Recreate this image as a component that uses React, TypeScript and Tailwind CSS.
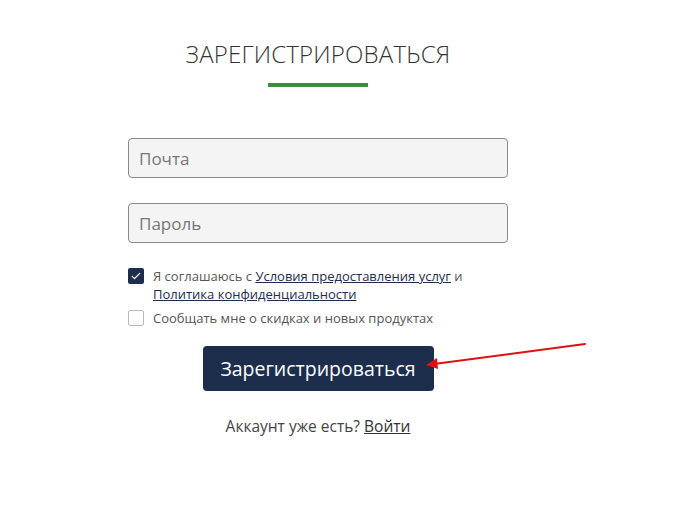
export default function App() {
  return (
    <div className="relative min-h-[520px] w-[676px] bg-white font-['Open_Sans',sans-serif] text-[#333]">
      <div className="ml-[128px] flex w-[380px] flex-col items-center pt-[38px]">
        <h1 className="h-[32px] text-[24px] leading-[32px] font-light tracking-[0.2px] text-[#333]">
          ЗАРЕГИСТРИРОВАТЬСЯ
        </h1>
        <div className="mt-[13px] h-[4px] w-[100px] bg-[#3d8c40]" />

        <input
          placeholder="Почта"
          className="mt-[51px] h-[40px] w-full rounded-[4px] border border-[#8a8a8a] bg-[#f4f4f4] px-[10px] text-[17px] text-[#333] outline-none placeholder:text-[#777]"
        />
        <input
          placeholder="Пароль"
          className="mt-[25px] h-[40px] w-full rounded-[4px] border border-[#8a8a8a] bg-[#f4f4f4] px-[10px] text-[17px] text-[#333] outline-none placeholder:text-[#777]"
        />

        <div className="mt-[24px] flex w-full flex-col gap-[6px] text-[13px] leading-[18px] text-[#555]">
          <label className="flex items-start gap-[9px]">
            <span className="mt-[1px] flex h-[16px] w-[16px] shrink-0 items-center justify-center rounded-[2px] bg-[#1d2e4d]">
              <svg viewBox="0 0 16 16" className="h-[12px] w-[12px]" fill="none" stroke="white" strokeWidth="1.8" strokeLinecap="round" strokeLinejoin="round">
                <path d="M3 8.5l3 3 7-7" />
              </svg>
            </span>
            <span>
              Я соглашаюсь с{" "}
              <a className="text-[#1d2e4d] underline">Условия предоставления услуг</a> и{" "}
              <a className="text-[#1d2e4d] underline">Политика конфиденциальности</a>
            </span>
          </label>
          <label className="flex items-start gap-[9px]">
            <span className="mt-[1px] h-[16px] w-[16px] shrink-0 rounded-[2px] border border-[#bbb] bg-white" />
            <span>Сообщать мне о скидках и новых продуктах</span>
          </label>
        </div>

        <button className="mt-[19px] h-[45px] w-[231px] rounded-[4px] bg-[#1d2e4d] text-[19.5px] text-white">
          Зарегистрироваться
        </button>

        <p className="mt-[24px] text-[15.5px] text-[#444]">
          Аккаунт уже есть? <a className="text-[#333] underline">Войти</a>
        </p>
      </div>

      <svg className="absolute left-[420px] top-[338px]" width="170" height="36" viewBox="0 0 170 36">
        <line x1="165" y1="6" x2="14" y2="26" stroke="#e01010" strokeWidth="2" strokeLinecap="round" />
        <path d="M6 27 L17 20 L18 31 Z" fill="#e01010" />
      </svg>
    </div>
  );
}
